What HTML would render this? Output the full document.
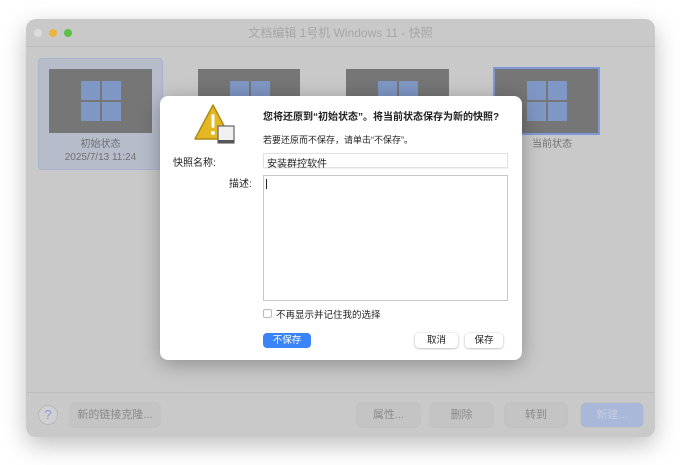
<!DOCTYPE html>
<html><head><meta charset="utf-8"><style>
*{box-sizing:border-box;margin:0;padding:0}
body{width:680px;height:465px;background:#fff;font-family:"Liberation Sans","Noto Sans CJK SC",sans-serif;position:relative;overflow:hidden}
.win{position:absolute;left:26px;top:19px;width:629px;height:418px;background:#c9c9c9;border-radius:10px;box-shadow:0 8px 24px rgba(0,0,0,.25);overflow:hidden}
.title{position:absolute;left:0;top:0;width:100%;height:28px;border-bottom:1px solid #bdbdbd;text-align:center;line-height:28px;font-size:12px;color:#a6a6a6}
.dot{position:absolute;top:10px;width:8px;height:8px;border-radius:50%}
.thumb{position:absolute;background:#767676}
.sel{position:absolute;left:12px;top:39px;width:125px;height:112px;background:#b7bccb;border:1px solid #a9b4cf;border-radius:4px}
.wl{position:absolute;width:40px;height:40px}
.wl i{position:absolute;width:19px;height:19px;background:#7f97c4}
.lbl{position:absolute;font-size:10px;color:#707070;text-align:center;line-height:13px}
.bb{position:absolute;top:384px;height:24px;border-radius:5px;background:#c4c4c4;box-shadow:0 0 1px rgba(0,0,0,.2);font-size:11px;color:#8a8a8a;text-align:center;line-height:24px}
.dlg{position:absolute;left:160px;top:96px;width:362px;height:264px;background:#fff;border-radius:8px;box-shadow:0 4px 20px rgba(0,0,0,.3)}
.t{position:absolute;font-size:10px;color:#222;white-space:nowrap}
.btn{position:absolute;top:237px;height:15px;border-radius:4px;background:#fff;box-shadow:0 0.5px 2px rgba(0,0,0,.35);font-size:9.5px;text-align:center;line-height:15px;color:#222}
</style></head><body>
<div class="win">
<div class="title">文档编辑 1号机 Windows 11 - 快照</div>
<div class="dot" style="left:8px;background:#ddd"></div>
<div class="dot" style="left:23px;background:#e9b53a"></div>
<div class="dot" style="left:38px;background:#5fc045"></div>
<div class="sel"></div>
<div class="thumb" style="left:23px;top:50px;width:103px;height:64px"></div>
<div class="thumb" style="left:172px;top:50px;width:102px;height:40px"></div>
<div class="thumb" style="left:320px;top:50px;width:103px;height:40px"></div>
<div class="thumb" style="left:467px;top:48px;width:107px;height:68px;border:2px solid #7f97d8"></div>
<div class="wl" style="left:55px;top:62px"><i style="left:0;top:0"></i><i style="left:21px;top:0"></i><i style="left:0;top:21px"></i><i style="left:21px;top:21px"></i></div>
<div class="wl" style="left:204px;top:62px"><i style="left:0;top:0"></i><i style="left:21px;top:0"></i></div>
<div class="wl" style="left:352px;top:62px"><i style="left:0;top:0"></i><i style="left:21px;top:0"></i></div>
<div class="wl" style="left:501px;top:62px"><i style="left:0;top:0"></i><i style="left:21px;top:0"></i><i style="left:0;top:21px"></i><i style="left:21px;top:21px"></i></div>
<div class="lbl" style="left:12px;top:119px;width:125px">初始状态<br>2025/7/13 11:24</div>
<div class="lbl" style="left:496px;top:119px;width:60px">当前状态</div>
<div style="position:absolute;left:0;top:373px;width:100%;border-top:1px solid #bdbdbd"></div>
<div style="position:absolute;left:12px;top:386px;width:20px;height:20px;border-radius:50%;background:#cfcfd4;border:1px solid #b8b8b8;color:#8a9bd0;font-size:13px;text-align:center;line-height:18px">?</div>
<div class="bb" style="left:44px;width:90px">新的链接克隆...</div>
<div class="bb" style="left:331px;width:63px">属性...</div>
<div class="bb" style="left:404px;width:63px">删除</div>
<div class="bb" style="left:479px;width:62px">转到</div>
<div class="bb" style="left:555px;width:62px;background:#a9b8d8;color:#c4cde0">新建...</div>
</div>
<div class="dlg">
<svg style="position:absolute;left:33px;top:7px" width="46" height="44" viewBox="0 0 46 44"><path d="M20 2 L38 36 L2 36 Z" fill="#e3b824" stroke="#b08a10" stroke-width="1.5" stroke-linejoin="round"/><rect x="18.5" y="11" width="3" height="14" rx="1.5" fill="#fff"/><circle cx="20" cy="30" r="2" fill="#fff"/><rect x="25" y="23" width="16" height="17" fill="#f0f0f0" stroke="#666" stroke-width="1.2"/><rect x="25" y="37" width="16" height="3" fill="#555"/></svg>
<div class="t" style="left:103px;top:12px;font-weight:bold">您将还原到“初始状态”。将当前状态保存为新的快照?</div>
<div class="t" style="left:103px;top:37px;font-size:9px">若要还原而不保存，请单击“不保存”。</div>
<div class="t" style="left:13px;top:58px">快照名称:</div>
<div style="position:absolute;left:103px;top:57px;width:245px;height:15px;border:1px solid #e2e2e2;box-shadow:0 0.5px 1px rgba(0,0,0,.1)"></div>
<div class="t" style="left:107px;top:59px">安装群控软件</div>
<div class="t" style="left:69px;top:79px">描述:</div>
<div style="position:absolute;left:103px;top:79px;width:245px;height:126px;border:1px solid #c8c8c8"></div>
<div style="position:absolute;left:106px;top:83px;width:1px;height:10px;background:#222"></div>
<div style="position:absolute;left:103px;top:213px;width:9px;height:9px;border:1px solid #bbb;border-radius:2px"></div>
<div class="t" style="left:116px;top:211px;font-size:9.5px">不再显示并记住我的选择</div>
<div class="btn" style="left:103px;width:48px;background:#3a84f7;color:#fff;box-shadow:none">不保存</div>
<div class="btn" style="left:255px;width:43px">取消</div>
<div class="btn" style="left:305px;width:38px">保存</div>
</div>
</body></html>
